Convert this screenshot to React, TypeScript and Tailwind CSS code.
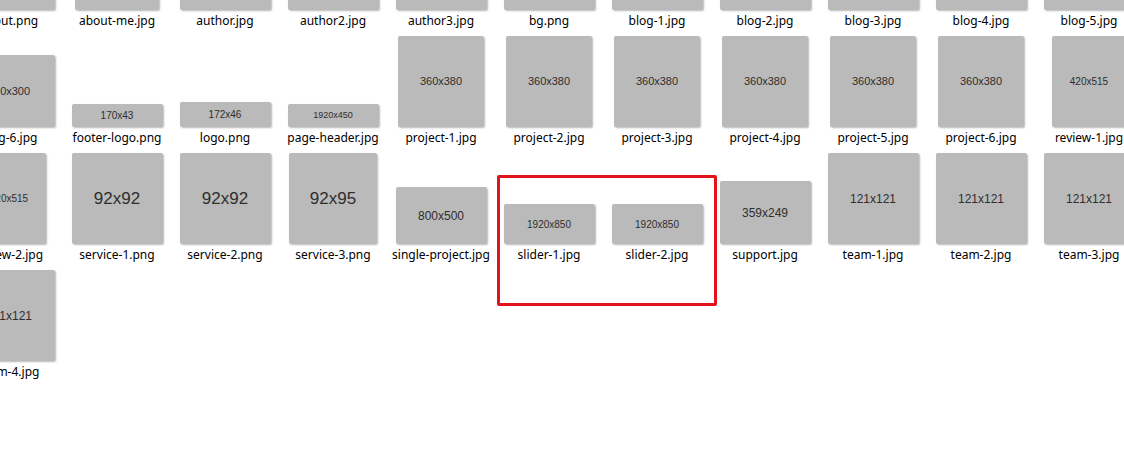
type Thumb = { name: string; w: number; h: number; text: string; fs: number };

const rows: Thumb[][] = [
    [
        { name: 'about.png', w: 91, h: 91, text: '', fs: 11 },
        { name: 'about-me.jpg', w: 84, h: 91, text: '', fs: 11 },
        { name: 'author.jpg', w: 91, h: 91, text: '', fs: 11 },
        { name: 'author2.jpg', w: 91, h: 91, text: '', fs: 11 },
        { name: 'author3.jpg', w: 91, h: 91, text: '', fs: 11 },
        { name: 'bg.png', w: 91, h: 91, text: '', fs: 11 },
        { name: 'blog-1.jpg', w: 91, h: 91, text: '', fs: 11 },
        { name: 'blog-2.jpg', w: 91, h: 91, text: '', fs: 11 },
        { name: 'blog-3.jpg', w: 91, h: 91, text: '', fs: 11 },
        { name: 'blog-4.jpg', w: 91, h: 91, text: '', fs: 11 },
        { name: 'blog-5.jpg', w: 91, h: 91, text: '', fs: 11 },
    ],
    [
        { name: 'blog-6.jpg', w: 91, h: 72, text: '360x300', fs: 11 },
        { name: 'footer-logo.png', w: 91, h: 23, text: '170x43', fs: 10 },
        { name: 'logo.png', w: 91, h: 25, text: '172x46', fs: 10 },
        { name: 'page-header.jpg', w: 91, h: 23, text: '1920x450', fs: 9 },
        { name: 'project-1.jpg', w: 86, h: 91, text: '360x380', fs: 11 },
        { name: 'project-2.jpg', w: 86, h: 91, text: '360x380', fs: 11 },
        { name: 'project-3.jpg', w: 86, h: 91, text: '360x380', fs: 11 },
        { name: 'project-4.jpg', w: 86, h: 91, text: '360x380', fs: 11 },
        { name: 'project-5.jpg', w: 86, h: 91, text: '360x380', fs: 11 },
        { name: 'project-6.jpg', w: 86, h: 91, text: '360x380', fs: 11 },
        { name: 'review-1.jpg', w: 74, h: 91, text: '420x515', fs: 10 },
    ],
    [
        { name: 'review-2.jpg', w: 74, h: 91, text: '420x515', fs: 10 },
        { name: 'service-1.png', w: 91, h: 91, text: '92x92', fs: 17 },
        { name: 'service-2.png', w: 91, h: 91, text: '92x92', fs: 17 },
        { name: 'service-3.png', w: 88, h: 91, text: '92x95', fs: 17 },
        { name: 'single-project.jpg', w: 91, h: 57, text: '800x500', fs: 12 },
        { name: 'slider-1.jpg', w: 91, h: 40, text: '1920x850', fs: 10 },
        { name: 'slider-2.jpg', w: 91, h: 40, text: '1920x850', fs: 10 },
        { name: 'support.jpg', w: 91, h: 63, text: '359x249', fs: 12 },
        { name: 'team-1.jpg', w: 91, h: 91, text: '121x121', fs: 12 },
        { name: 'team-2.jpg', w: 91, h: 91, text: '121x121', fs: 12 },
        { name: 'team-3.jpg', w: 91, h: 91, text: '121x121', fs: 12 },
    ],
    [{ name: 'team-4.jpg', w: 91, h: 91, text: '121x121', fs: 12 }],
];

function FileTile({ item }: { item: Thumb }) {
    return (
        <div className="flex h-[117px] w-[108px] shrink-0 flex-col items-center pt-[4px]">
            {/* thumbnail sits on the bottom of a 91px box */}
            <div className="flex h-[91px] w-[91px] items-end justify-center">
                <div
                    className="flex shrink-0 items-center justify-center rounded-[2px] bg-[#bababa] font-['Liberation_Sans',Arial,sans-serif] text-[#2e2e2e] shadow-[1px_1px_2px_rgba(0,0,0,0.28)]"
                    style={{ width: item.w, height: item.h, fontSize: item.fs }}
                >
                    {item.text}
                </div>
            </div>
            <div className="mt-[3px] whitespace-nowrap text-center font-['Noto_Sans',sans-serif] text-[12px] leading-[16px] text-black">
                {item.name}
            </div>
        </div>
    );
}

export default function App() {
    return (
        <div className="relative h-[459px] w-[1124px] overflow-hidden bg-white">
            <div className="-mt-[85px] -ml-[45px] flex flex-col">
                {rows.map((row, i) => (
                    <div key={i} className="flex">
                        {row.map((item) => (
                            <FileTile key={item.name} item={item} />
                        ))}
                    </div>
                ))}
            </div>

            {/* selection highlight */}
            <div className="absolute left-[497px] top-[175px] h-[131px] w-[220px] rounded-[2px] border-[3px] border-[#e3131b]" />
        </div>
    );
}
